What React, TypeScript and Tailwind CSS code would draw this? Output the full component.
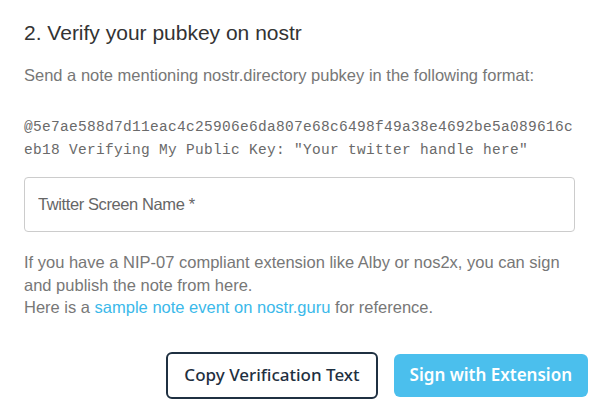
import React, { useState } from 'react';

const PUBKEY = '5e7ae588d7d11eac4c25906e6da807e68c6498f49a38e4692be5a089616ceb18';

const App: React.FC = () => {
    const [handle, setHandle] = useState('');

    return (
        <div className="w-[597px] h-[409px] bg-white overflow-hidden">
            <div className="h-full pl-6 pr-[22px] pt-[19px] font-['Liberation_Sans',Arial,sans-serif]">
                <h2 className="text-[21px] leading-7 text-[#333]">2. Verify your pubkey on nostr</h2>

                <p className="mt-[16px] text-[16.5px] leading-6 text-[#777]">
                    Send a note mentioning nostr.directory pubkey in the following format:
                </p>

                <p className="mt-[29px] break-all font-['Liberation_Mono',monospace] text-[14.5px] tracking-[0.3px] leading-[23px] text-[#6a6a6a]">
                    @{PUBKEY} Verifying My Public Key: "Your twitter handle here"
                </p>

                <div className="mt-[15px]">
                    <input
                        value={handle}
                        onChange={e => setHandle(e.target.value)}
                        placeholder="Twitter Screen Name *"
                        className="w-full h-[55px] rounded border border-[#ccc] px-[13px] text-[16.5px] tracking-[-0.4px] text-[#333] placeholder:text-[#666] outline-none"
                    />
                </div>

                <p className="mt-[19px] text-[16.5px] leading-[22.5px] text-[#777]">
                    If you have a NIP-07 compliant extension like Alby or nos2x, you can sign and publish the note from here.
                    <br />
                    Here is a <a href="#" className="text-[#3bb9ea]">sample note event on nostr.guru</a> for reference.
                </p>

                <div className="mt-[33px] flex justify-end items-center gap-4 -mr-[13px]">
                    <button className="h-[47px] px-[16px] rounded-md border-2 border-[#1f3041] bg-white text-[#1f3041] font-['Noto_Sans',sans-serif] font-medium text-[17px]">
                        Copy Verification Text
                    </button>
                    <button className="h-[43px] px-[16px] rounded-md bg-[#4bbfed] text-white font-['Noto_Sans',sans-serif] font-semibold text-[17px]">
                        Sign with Extension
                    </button>
                </div>
            </div>
        </div>
    );
};

export default App;
